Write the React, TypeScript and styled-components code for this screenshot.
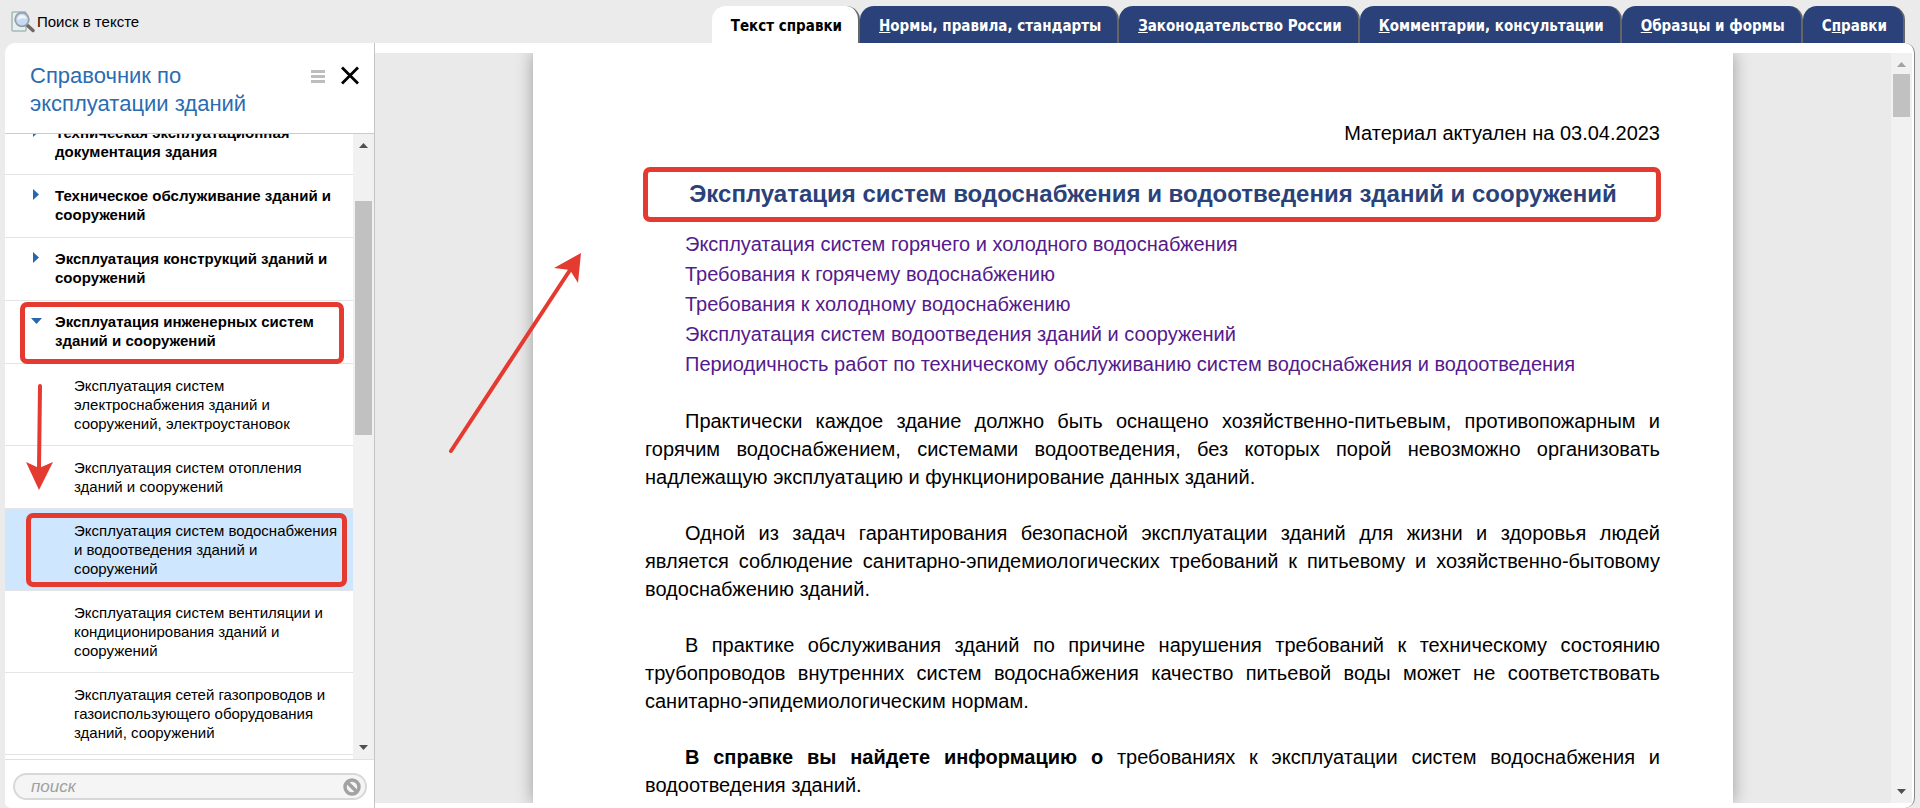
import React from "react";
import styled, { createGlobalStyle, css } from "styled-components";

const GlobalStyle = createGlobalStyle`
  *, *::before, *::after { box-sizing: border-box; }
  body {
    margin: 0;
    background: #ebebeb;
    color: #000;
    font: 15px/19px "Liberation Sans", Arial, sans-serif;
  }
  button { font: inherit; color: inherit; border: 0; padding: 0; background: none; cursor: pointer; }
  a { color: inherit; text-decoration: none; }
`;

const ACCENT = "#e53a2f";

const Screen = styled.div`
  display: flex;
  flex-direction: column;
  height: 100vh;
  overflow: hidden;
`;

const TopBar = styled.header`
  display: flex;
  justify-content: space-between;
  align-items: flex-end;
  height: 43px;
  padding: 0 15px 0 11px;
`;

const TextSearch = styled.button`
  display: flex;
  align-items: center;
  gap: 2px;
  height: 43px;
`;

const Tabs = styled.nav`
  display: flex;
  height: 37px;
`;

const Tab = styled.a<{ $active?: boolean }>`
  padding: 0 16px 0 19px;
  border-right: 2px solid #666;
  border-radius: 14px 14px 0 0;
  background: ${(p) => (p.$active ? "#fff" : "#2a4179")};
  color: ${(p) => (p.$active ? "#000" : "#fff")};
  font: bold 15px/40px "DejaVu Sans Condensed", Tahoma, sans-serif;
  white-space: nowrap;
`;

const Workspace = styled.div`
  display: flex;
  flex: 1;
  min-height: 0;
  margin: 0 5px;
  border-right: 1px solid #888;
  border-radius: 10px 10px 10px 6px;
  background: #fff;
`;

const Sidebar = styled.aside`
  position: relative;
  display: flex;
  flex-direction: column;
  flex: none;
  width: 370px;
  border-right: 1px solid #c4c4c4;
`;

const SidebarHead = styled.div`
  display: flex;
  align-items: flex-start;
  gap: 15px;
  padding: 19px 15px 15px 25px;
  border-bottom: 1px solid #ccc;
`;

const SidebarTitle = styled.h2`
  flex: 1;
  margin: 0;
  color: #2b6cb0;
  font-weight: normal;
  font-size: 22px;
  line-height: 28px;
`;

const IconButton = styled.button`
  display: flex;
  margin-top: 4px;
`;

const TreeArea = styled.div`
  display: flex;
  flex: 1;
  min-height: 0;
`;

const TreeClip = styled.div`
  flex: 1;
  overflow: hidden;
`;

const Tree = styled.ul`
  margin: -22px 0 0;
  padding: 0;
  list-style: none;
`;

const TreeItem = styled.li<{ $level: number; $selected?: boolean }>`
  position: relative;
  border-bottom: 1px solid #e4e4e4;
  background: ${(p) => (p.$selected ? "#cfe6ff" : "transparent")};
  ${(p) =>
    p.$level === 0
      ? css`
          padding: 11px 14px 13px 50px;
          font-weight: bold;
        `
      : css`
          padding: 12px 14px 12px 69px;
        `}
`;

const Toggle = styled.svg`
  position: absolute;
  left: 26px;
  top: 14px;
`;

const frame = css`
  border: 5px solid ${ACCENT};
  border-radius: 7px;
`;

const ItemFrame = styled.span<{ $inner?: boolean }>`
  ${frame}
  position: absolute;
  inset: ${(p) => (p.$inner ? "4px 6px 3px 21px" : "1px 9px -1px 15px")};
  z-index: 1;
  pointer-events: none;
`;

const Track = styled.div`
  display: flex;
  flex-direction: column;
  align-items: center;
  flex: none;
  width: 21px;
  padding: 9px 0;
  background: #f1f1f1;
`;

const Thumb = styled.div<{ $size: number }>`
  width: 17px;
  flex: ${(p) => p.$size} 1 0;
  background: #c1c1c1;
`;

const Space = styled.div<{ $grow: number }>`
  flex: ${(p) => p.$grow} 1 0;
`;

const SearchRow = styled.div`
  padding: 13px 7px 8px 8px;
  border-top: 1px solid #e0e0e0;
`;

const SearchBox = styled.div`
  display: flex;
  align-items: center;
  height: 27px;
  padding: 0 4px 0 16px;
  border: 2px solid #d8d8d8;
  border-radius: 14px;
  background: #f5f5f5;
`;

const SearchInput = styled.input`
  flex: 1;
  min-width: 0;
  padding: 0;
  border: 0;
  outline: 0;
  background: none;
  font: italic 17px/20px "Liberation Sans", Arial, sans-serif;
  &::placeholder { color: #a0a0a0; opacity: 1; }
`;

const Arrow = styled.svg`
  position: absolute;
  pointer-events: none;
`;

const SideArrow = styled(Arrow)`
  left: 20px;
  top: 340px;
`;

const PageArrow = styled(Arrow)`
  left: 70px;
  top: 196px;
`;

const Viewer = styled.main`
  position: relative;
  display: flex;
  flex: 1;
  min-width: 0;
  margin: 10px 2px 5px 0;
  background: #eaeaea;
`;

const Canvas = styled.div`
  display: flex;
  justify-content: center;
  flex: 1;
  min-width: 0;
  overflow: hidden;
`;

const Sheet = styled.article`
  width: 100%;
  max-width: 1200px;
  padding: 66px 73px 0 112px;
  background: #fff;
  box-shadow: 0 0 16px rgba(0, 0, 0, 0.34);
  font-size: 20px;
  line-height: 28px;
`;

const Actual = styled.p`
  margin: 0 0 20px;
  text-align: right;
`;

const Title = styled.h1`
  ${frame}
  margin: 0 -1px 7px -2px;
  padding: 8px 0 9px 2px;
  color: #2a4179;
  font-size: 24px;
  line-height: 28px;
  text-align: center;
`;

const Contents = styled.ul`
  margin: 0 0 28px;
  padding: 0 0 0 40px;
  list-style: none;
  color: #551a8b;
  line-height: 30px;
`;

const Paragraph = styled.p`
  margin: 0 0 28px;
  text-align: justify;
  text-indent: 40px;
`;

function ScrollBar({ before, size, after, atTop }: { before: number; size: number; after: number; atTop?: boolean }) {
  return (
    <Track aria-hidden="true">
      <svg width="9" height="5" viewBox="0 0 9 5"><path d="M4.500 0L9 5H0z" fill={atTop ? "#a3a3a3" : "#505050"} /></svg>
      <Space $grow={before} />
      <Thumb $size={size} />
      <Space $grow={after} />
      <svg width="9" height="5" viewBox="0 0 9 5"><path d="M0 0h9L4.500 5z" fill="#505050" /></svg>
    </Track>
  );
}

function SearchIcon() {
  return (
    <svg width="24" height="22" viewBox="0 0 24 22">
      <rect x="1" y="1" width="14" height="19" rx="1" fill="#e3f1f3" stroke="#a9b9b9" strokeWidth="1.500" />
      <path d="M16 14l6 5.500" stroke="#6f6a68" strokeWidth="3.500" strokeLinecap="round" />
      <circle cx="11" cy="8.500" r="6.800" fill="#c6daf0" stroke="#97a0a8" strokeWidth="1.800" />
      <path d="M6.500 9a4.500 4.500 0 0 1 9-1q-4-2-9 1z" fill="#eef5fc" />
    </svg>
  );
}

const tabs = [
  ["", "", "Текст справки"],
  ["", "Н", "ормы, правила, стандарты"],
  ["", "З", "аконодательство России"],
  ["", "К", "омментарии, консультации"],
  ["", "О", "бразцы и формы"],
  ["С", "п", "равки"],
];

type Node = { text: string; level: number; open?: boolean; selected?: boolean };

const tree: Node[] = [
  { level: 0, text: "Техническая эксплуатационная документация здания" },
  { level: 0, text: "Техническое обслуживание зданий и сооружений" },
  { level: 0, text: "Эксплуатация конструкций зданий и сооружений" },
  { level: 0, text: "Эксплуатация инженерных систем зданий и сооружений", open: true },
  { level: 1, text: "Эксплуатация систем электроснабжения зданий и сооружений, электроустановок" },
  { level: 1, text: "Эксплуатация систем отопления зданий и сооружений" },
  { level: 1, text: "Эксплуатация систем водоснабжения и водоотведения зданий и сооружений", selected: true },
  { level: 1, text: "Эксплуатация систем вентиляции и кондиционирования зданий и сооружений" },
  { level: 1, text: "Эксплуатация сетей газопроводов и газоиспользующего оборудования зданий, сооружений" },
];

const contents = [
  "Эксплуатация систем горячего и холодного водоснабжения",
  "Требования к горячему водоснабжению",
  "Требования к холодному водоснабжению",
  "Эксплуатация систем водоотведения зданий и сооружений",
  "Периодичность работ по техническому обслуживанию систем водоснабжения и водоотведения",
];

export default function App() {
  return (
    <Screen>
      <GlobalStyle />
      <TopBar>
        <TextSearch><SearchIcon /><span>Поиск в тексте</span></TextSearch>
        <Tabs>
          {tabs.map(([start, key, rest], i) => (
            <Tab key={rest} href="#" $active={i === 0}>{start}{key && <u>{key}</u>}{rest}</Tab>
          ))}
        </Tabs>
      </TopBar>
      <Workspace>
        <Sidebar>
          <SidebarHead>
            <SidebarTitle>Справочник по эксплуатации зданий</SidebarTitle>
            <IconButton aria-label="Меню">
              <svg width="15" height="20" viewBox="0 0 15 20"><path d="M0 5.500h14M0 10.500h14M0 15.500h14" stroke="#bdbdbd" strokeWidth="3" /></svg>
            </IconButton>
            <IconButton aria-label="Закрыть">
              <svg width="18" height="20" viewBox="0 0 18 20"><path d="M1 1.500l16 16M17 1.500l-16 16" stroke="#000" strokeWidth="2.800" /></svg>
            </IconButton>
          </SidebarHead>
          <TreeArea>
            <TreeClip>
              <Tree>
                {tree.map((n) => (
                  <TreeItem key={n.text} $level={n.level} $selected={n.selected}>
                    {n.level === 0 && (
                      <Toggle width="12" height="12" viewBox="0 0 12 12">
                        <path d={n.open ? "M0 3h11L5.500 9z" : "M2 0l6 5.500-6 5.500z"} fill="#2567b0" />
                      </Toggle>
                    )}
                    <a href="#">{n.text}</a>
                    {(n.open || n.selected) && <ItemFrame $inner={n.selected} />}
                  </TreeItem>
                ))}
              </Tree>
            </TreeClip>
            <ScrollBar before={53} size={234} after={310} />
          </TreeArea>
          <SearchRow>
            <SearchBox>
              <SearchInput type="text" placeholder="поиск" aria-label="Поиск" />
              <button aria-label="Очистить">
                <svg width="18" height="18" viewBox="0 0 18 18" display="block">
                  <circle cx="9" cy="9" r="7" fill="#f5f5f5" stroke="#a2a2a2" strokeWidth="3.500" />
                  <path d="M4.500 4.500l9 9" stroke="#a2a2a2" strokeWidth="3.500" />
                </svg>
              </button>
            </SearchBox>
          </SearchRow>
          <SideArrow width="30" height="110" viewBox="0 0 30 110">
            <path d="M15 3L14 85" stroke={ACCENT} strokeWidth="4" strokeLinecap="round" />
            <path d="M1 79l13 6 14-6-14 28z" fill={ACCENT} />
          </SideArrow>
        </Sidebar>
        <Viewer>
          <Canvas>
            <Sheet>
              <Actual>Материал актуален на 03.04.2023</Actual>
              <Title>Эксплуатация систем водоснабжения и водоотведения зданий и сооружений</Title>
              <Contents>
                {contents.map((c) => <li key={c}><a href="#">{c}</a></li>)}
              </Contents>
              <Paragraph>Практически каждое здание должно быть оснащено хозяйственно-питьевым, противопожарным и горячим водоснабжением, системами водоотведения, без которых порой невозможно организовать надлежащую эксплуатацию и функционирование данных зданий.</Paragraph>
              <Paragraph>Одной из задач гарантирования безопасной эксплуатации зданий для жизни и здоровья людей является соблюдение санитарно-эпидемиологических требований к питьевому и хозяйственно-бытовому водоснабжению зданий.</Paragraph>
              <Paragraph>В практике обслуживания зданий по причине нарушения требований к техническому состоянию трубопроводов внутренних систем водоснабжения качество питьевой воды может не соответствовать санитарно-эпидемиологическим нормам.</Paragraph>
              <Paragraph><b>В справке вы найдете информацию о</b> требованиях к эксплуатации систем водоснабжения и водоотведения зданий.</Paragraph>
            </Sheet>
          </Canvas>
          <ScrollBar before={7} size={43} after={669} atTop />
          <PageArrow width="140" height="210" viewBox="0 0 140 210">
            <path d="M6 202L125 21" stroke={ACCENT} strokeWidth="4" strokeLinecap="round" />
            <path d="M136 4l-3 30-8-13-16-2z" fill={ACCENT} />
          </PageArrow>
        </Viewer>
      </Workspace>
    </Screen>
  );
}
